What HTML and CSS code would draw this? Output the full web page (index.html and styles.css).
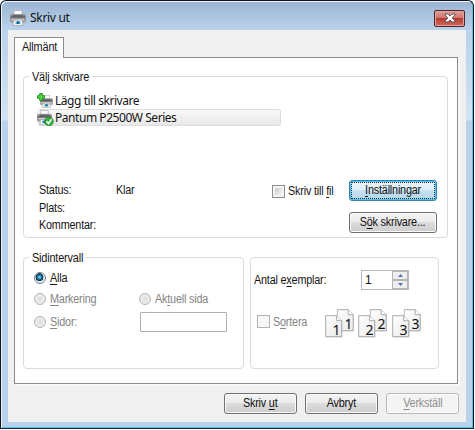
FILE: index.html
```html
<!DOCTYPE html>
<html lang="sv">
<head>
<meta charset="utf-8">
<title>Skriv ut</title>
<link rel="stylesheet" href="styles.css">
</head>
<body>
<svg class="defs" width="0" height="0" aria-hidden="true">
  <defs>
    <linearGradient id="body" x1="0" y1="0" x2="0" y2="1"><stop offset="0" stop-color="#b4b4b4"/><stop offset=".3" stop-color="#666"/><stop offset=".65" stop-color="#8c8c8c"/><stop offset="1" stop-color="#c4c4c4"/></linearGradient>
    <linearGradient id="paper" x1="0" y1="0" x2="1" y2="1"><stop offset="0" stop-color="#fff"/><stop offset="1" stop-color="#e9e9e9"/></linearGradient>
    <symbol id="printer" viewBox="0 0 16 16">
      <path d="M4 .5h8v5H4z" fill="#fafafa" stroke="#aaa" stroke-width=".7"/>
      <rect x=".5" y="4.5" width="15" height="7.5" rx="1.2" fill="url(#body)" stroke="#858585" stroke-width=".7"/>
      <path d="M3 5h10v2.5H3z" fill="#606468"/>
      <path d="M1.5 9.2h13" stroke="#e4e4e4"/>
      <path d="M3.8 10h8.4l.7 5.3H3.1z" fill="#fff" stroke="#999" stroke-width=".7"/>
      <path d="M5.5 11.3h5v2.7h-5z" fill="#4ba9d1"/><path d="M7 11.3h2v2.7H7z" fill="#245e8a"/>
    </symbol>
    <symbol id="page" viewBox="0 0 19 24">
      <path d="M1.5 1.5h11l5 5v16h-16z" fill="#ccc" opacity=".6"/>
      <path d="M.7.7h11l5 5v16H.7z" fill="url(#paper)" stroke="#aaa" stroke-width="1"/>
      <path d="M11.7.7v5h5" fill="#fff" stroke="#aaa" stroke-width="1"/>
    </symbol>
  </defs>
</svg>
<div class="window">
  <header class="titlebar">
    <svg class="app-icon" width="16" height="16"><use href="#printer"/></svg>
    <h1>Skriv ut</h1>
    <button class="close" aria-label="Stäng"><svg width="12" height="10" viewBox="0 0 12 10"><path d="M1 1h3l2 2 2-2h3v1L8.2 5 11 8v1H8L6 7 4 9H1V8l2.8-3L1 2z" fill="#fff" stroke="#514b5c" stroke-width=".9"/></svg></button>
  </header>
  <main class="client">
    <div class="tab"><span>Allmänt</span></div>
    <section class="panel">
      <div class="group printers">
        <div class="legend choose"><span>Välj skrivare</span></div>
        <div class="row">
          <svg width="17" height="16" viewBox="0 0 17 16"><use href="#printer" x="3" y="2" width="13" height="13"/><path d="M2.7.5h2.6v2.2h2.2v2.6H5.3v2.2H2.7V5.3H.5V2.7h2.2z" fill="#5bd33c" stroke="#168a18" stroke-width=".9"/></svg>
          <b>Lägg till skrivare</b>
        </div>
        <div class="row selected">
          <svg width="17" height="16" viewBox="0 0 17 16"><use href="#printer" x="0" y="0" width="15" height="15"/><circle cx="12" cy="11.5" r="4.3" fill="#35b33b" stroke="#168325" stroke-width=".8"/><path d="M9.5 11.3l2 2.2 3-4.2" fill="none" stroke="#fff" stroke-width="1.5"/></svg>
          <b>Pantum P2500W Series</b>
        </div>
        <div class="details">
          <div class="info"><span>Status:</span><span>Klar</span><span>Plats:</span><i></i><span>Kommentar:</span></div>
          <label class="to-file"><i class="check"></i><span>Skriv till <u>f</u>il</span></label>
          <div class="stack">
            <button class="btn focused"><span><u>I</u>nställningar</span></button>
            <button class="btn"><span>S<u>ö</u>k skrivare...</span></button>
          </div>
        </div>
      </div>
      <div class="lower">
        <div class="group range">
          <div class="legend pages-legend"><span>Sidintervall</span></div>
          <label class="all"><i class="radio on"></i><span><u>A</u>lla</span></label>
          <label class="off"><i class="radio"></i><span><u>M</u>arkering</span></label>
          <label class="off"><i class="radio"></i><span>Ak<u>t</u>uell sida</span></label>
          <label class="off"><i class="radio"></i><span><u>S</u>idor:</span></label>
          <div class="field"></div>
        </div>
        <div class="group copies">
          <div class="count">
            <span>Antal e<u>x</u>emplar:</span>
            <div class="spinner"><b>1</b><div class="arrows"><i><svg width="5" height="3"><path d="M0 3L2.5 0 5 3z" fill="#5c6fa5"/></svg></i><i><svg width="5" height="3"><path d="M0 0L2.5 3 5 0z" fill="#5c6fa5"/></svg></i></div></div>
          </div>
          <div class="collate">
            <label class="off"><i class="check"></i><span>S<u>o</u>rtera</span></label>
            <svg class="pages" width="99" height="31" viewBox="0 0 99 31">
              <use href="#page" x="11.5" y="0" width="19" height="24"/><text x="19.5" y="20">1</text>
              <use href="#page" x="0" y="6" width="19" height="24"/><text x="7.5" y="26">1</text>
              <use href="#page" x="44.5" y="0" width="19" height="24"/><text x="52.5" y="20">2</text>
              <use href="#page" x="33" y="6" width="19" height="24"/><text x="40.5" y="26">2</text>
              <use href="#page" x="78.5" y="0" width="19" height="24"/><text x="86.5" y="20">3</text>
              <use href="#page" x="67" y="6" width="19" height="24"/><text x="74.5" y="26">3</text>
            </svg>
          </div>
        </div>
      </div>
    </section>
    <footer class="actions">
      <button class="btn"><span>Skriv <u>u</u>t</span></button>
      <button class="btn"><span>Avbryt</span></button>
      <button class="btn disabled"><span><u>V</u>erkställ</span></button>
    </footer>
  </main>
</div>
</body>
</html>
```
FILE: styles.css
```css
* { box-sizing: border-box; }
body { margin: 0; width: 475px; height: 430px; overflow: hidden; background: #fff; font: 12px/16px "Liberation Sans", Arial, sans-serif; color: #141414; letter-spacing: -.2px; }
.defs { position: absolute; }
u { text-decoration: underline; text-underline-offset: 2px; text-decoration-thickness: 1px; text-decoration-skip-ink: none; }
i { font-style: normal; }
b { font-weight: normal; white-space: nowrap; }
/* Condenses the dialog face horizontally. */
span { display: inline-block; white-space: nowrap; transform: scaleX(.9); transform-origin: left center; }
svg { display: block; flex: none; }
.window { width: 474px; height: 429px; border: 1px solid #10151b; border-bottom-color: #172b35; border-radius: 6px 6px 0 0; padding: 0 6px 6px; background: linear-gradient(#9ab5d3, #b9d1ea 28px, #d3e4f4 119px, #b9d1ea 120px); box-shadow: inset 1px 1px #edf5fc, inset -1px -1px #5cc5db; }
.titlebar { height: 29px; display: flex; align-items: center; padding: 5px 2px 0 3px; }
.titlebar h1 { margin: 0 auto 0 4px; font: 12px/16px "Noto Sans", "Open Sans", sans-serif; letter-spacing: -.3px; color: #111; }
.close { width: 31px; height: 17px; padding: 0; display: grid; place-items: center; border: 1px solid #53232b; border-radius: 2px; box-shadow: inset 0 0 0 1px #e6a39b; background: linear-gradient(#dda096, #cf7469 48%, #b63c31 50%, #d0695b); }
.client { height: 392px; margin: 0 1px; background: #f0f0f0; padding: 7px 8px 0 6px; }
.tab { width: 50px; height: 21px; margin-bottom: -1px; position: relative; border: 1px solid #898c95; border-bottom: 0; background: #fff; padding-left: 7px; line-height: 19px; }
.panel { height: 327px; width: 444px; border: 1px solid #898c95; background: #fff; padding: 18px 9px 0 8px; box-shadow: 2px 2px #fafafa; }
.group { border: 1px solid #dcdcdf; border-radius: 4px; }
.legend { height: 16px; margin: -8px 0 0 5px; padding: 0 3px; background: #fff; white-space: nowrap; }
.choose { width: 63px; }
.pages-legend { width: 57px; }
.tab span, .choose span, .pages-legend span { transform: scaleX(.91); }
.printers { width: 425px; height: 162px; }
.row { display: flex; align-items: center; gap: 1px; width: 244px; height: 17px; margin-left: 13px; font: 12px/16px "Noto Sans", "Open Sans", sans-serif; letter-spacing: -.45px; }
.legend + .row { margin-top: 7px; }
.selected { border: 1px solid #dedede; border-left-color: #f0f0f0; border-radius: 3px; background: linear-gradient(#f8f8f8, #e8e8e8); }
.selected svg { margin-left: -1px; }
.details { display: flex; margin: 54px 9px 0 15px; }
.info { display: grid; grid-template-columns: 77px 80px; grid-auto-rows: 17.5px; padding-top: 2px; width: 233px; align-content: start; }
label { display: flex; align-items: center; height: 16px; }
.to-file { gap: 3px; margin-top: 3px; width: 77px; }
.check { width: 13px; height: 13px; flex: none; border: 1px solid #8e8f8f; background: linear-gradient(135deg, #c8cbcf, #f7f7f7) content-box, #f4f4f4; padding: 2px; }
.stack { display: grid; gap: 9px; }
.btn { width: 88px; height: 21px; padding: 0; border: 1px solid #707070; border-radius: 3px; background: linear-gradient(#f3f3f3, #ebebeb 49%, #dcdcdc 50%, #cdcdcd); box-shadow: inset 0 0 0 1px #fbfbfb; font: inherit; letter-spacing: inherit; color: #111; line-height: 17px; }
.btn span { transform-origin: center; }
.focused { position: relative; border-color: #3c7fb1; background: linear-gradient(#eaf4fa, #dceef8 49%, #c7e2f1 50%, #b4d3e4); box-shadow: inset 0 0 0 1px #45c8ee; }
.focused::after { content: ""; position: absolute; inset: 1px; border: 1px dotted #223; }
.lower { display: flex; gap: 6px; margin-top: 19px; }
.range { width: 221px; height: 112px; display: grid; grid-template-columns: 105px 90px; grid-template-rows: 8px 23px 20px 26px; align-items: center; padding-left: 10px; align-content: start; }
.range .legend { grid-column: 1 / 3; margin: -8px 0 0 -5px; align-self: start; }
.all { grid-column: 1 / 3; }
.range label { gap: 4px; }
.radio { width: 12px; height: 12px; border-radius: 50%; border: 1px solid #b0b3b5; background: radial-gradient(#dedede, #f4f4f4); flex: none; }
.radio.on { border-color: #798086; background: radial-gradient(circle at 45% 42%, #4fc3e8 0 1px, #16557c 2.5px, #0b2c48 3.7px, #e7eef1 4.2px); }
.off { color: #838383; }
.field { width: 87px; height: 20px; border: 1px solid #afafaf; border-radius: 1px; margin: 0 0 0 1px; }
.copies { width: 189px; height: 112px; padding: 11px 0 0 3px; }
.count { display: flex; align-items: center; height: 21px; }
.count > span { width: 107px; margin-right: 0; }
.spinner { width: 48px; height: 20px; display: flex; justify-content: space-between; border: 1px solid #b6babf; background: #fff; }
.spinner b { padding-left: 3px; line-height: 18px; }
.arrows { width: 16px; display: grid; grid-template-rows: 9px 9px; }
.arrows i { display: grid; place-items: center; border: 1px solid #b5b5b5; background: #eee; }
.collate { display: flex; align-items: center; margin: 19px 0 0 3px; }
.collate label { width: 68px; gap: 3px; margin-top: -6px; }
.collate .check { border-color: #b4b4b4; background: #f7f7f7; }
.pages text { font: 14px "Noto Sans", sans-serif; letter-spacing: 0; fill: #111; }
.actions { display: flex; gap: 8px; margin: 9px 0 0 210px; }
.actions .btn { width: 73px; flex: none; }
.btn.disabled { color: #8f8f8f; border-color: #b5b9bd; background: #f4f4f4; }
```
